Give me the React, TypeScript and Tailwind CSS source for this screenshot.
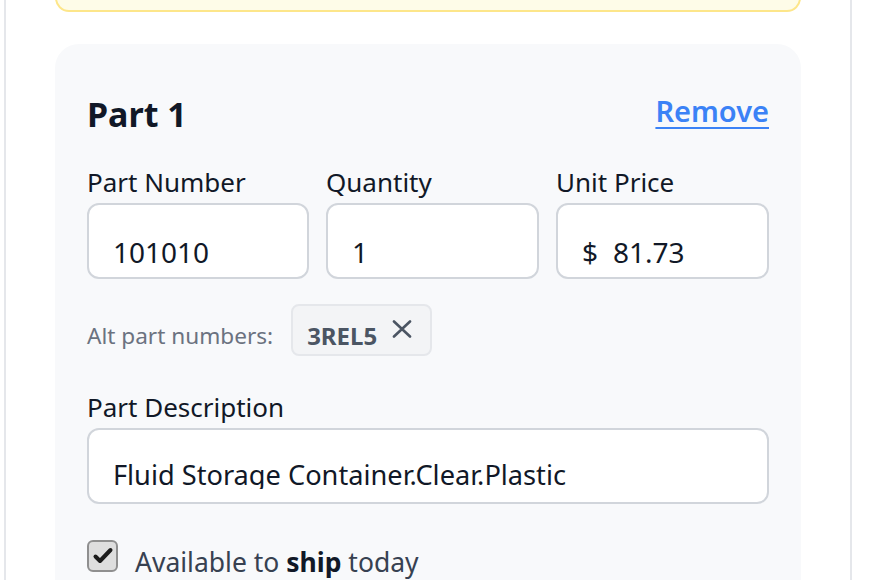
import React from "react";

const font = { fontFamily: '"Noto Sans", "Open Sans", sans-serif' };

function Field({ label, children }: { label: string; children: React.ReactNode }) {
  return (
    <div className="flex flex-col min-w-0">
      <div className="text-[26px] leading-[32px] text-[#111827]">{label}</div>
      <div className="mt-[5px] h-[76px] rounded-[12px] border-2 border-[#d1d5db] bg-white pl-[24px] pr-[16px] pt-[33px]">
        <div className="h-[28px] text-[28px] leading-[28px] text-[#111827] whitespace-nowrap flex">
          {children}
        </div>
      </div>
    </div>
  );
}

export default function App() {
  return (
    <div className="w-[880px] h-[580px] overflow-hidden bg-white flex" style={font}>
      <div className="ml-[4px] w-[848px] h-[580px] border-x-2 border-[#e5e7eb] px-[49px] flex flex-col">
        <div className="-mt-[40px] h-[52px] shrink-0 rounded-[14px] border-2 border-[#fde68a] bg-[#fefce8]" />
        <div className="mt-[32px] shrink-0 rounded-[24px] bg-[#f8f9fb] px-[32px] pt-[50px] pb-[40px]">
          <div className="flex items-start justify-between">
            <h2 className="text-[34px] leading-[40px] font-bold text-[#111827]">Part 1</h2>
            <a className="-mt-[3px] text-[29px] leading-[40px] font-semibold text-[#3b82f6] underline underline-offset-[5px] decoration-2">
              Remove
            </a>
          </div>

          <div className="mt-[32px] grid grid-cols-[222fr_213fr_213fr] gap-x-[17px]">
            <Field label="Part Number">101010</Field>
            <Field label="Quantity">1</Field>
            <Field label="Unit Price">
              <span>$</span>
              <span className="ml-[15px]">81.73</span>
            </Field>
          </div>

          <div className="mt-[25px] flex items-start gap-[18px]">
            <span className="mt-[18px] text-[22.6px] leading-[28px] text-[#6b7280]">Alt part numbers:</span>
            <div className="h-[52px] flex items-start rounded-[8px] border-2 border-[#e5e7eb] bg-[#f3f4f6] pl-[14px] pr-[18px]">
              <span className="mt-[16px] text-[24px] leading-[28px] font-bold text-[#4b5563]">3REL5</span>
              <svg
                className="mt-[14px] ml-[15px]"
                width="20"
                height="18"
                viewBox="0 0 20 18"
                fill="none"
                stroke="#4b5563"
                strokeWidth="2.6"
                strokeLinecap="round"
              >
                <path d="M2 1.5 L18 16.5 M18 1.5 L2 16.5" />
              </svg>
            </div>
          </div>

          <div className="mt-[35px] flex flex-col">
            <div className="text-[26px] leading-[32px] text-[#111827]">Part Description</div>
            <div className="mt-[5px] h-[76px] rounded-[12px] border-2 border-[#d1d5db] bg-white pl-[24px] pr-[16px] pt-[31px]">
              <div className="h-[28px] overflow-hidden text-[27.2px] leading-[28px] text-[#111827] whitespace-nowrap">
                Fluid Storage Container.Clear.Plastic
              </div>
            </div>
          </div>

          <div className="mt-[36px] flex items-start gap-[17px]">
            <div className="w-[31px] h-[32px] shrink-0 rounded-[6px] border-2 border-[#8f8f8f] bg-[#dedede] flex items-center justify-center">
              <svg width="22" height="20" viewBox="0 0 22 20" fill="none" stroke="#1c1c1c" strokeWidth="4" strokeLinecap="round" strokeLinejoin="round">
                <path d="M3.5 10.5 L8 15 L18.5 4" />
              </svg>
            </div>
            <span className="mt-[6px] text-[26.5px] leading-[32px] text-[#374151]">
              Available to <span className="font-bold text-[#111827]">ship</span> today
            </span>
          </div>
        </div>
      </div>
    </div>
  );
}
